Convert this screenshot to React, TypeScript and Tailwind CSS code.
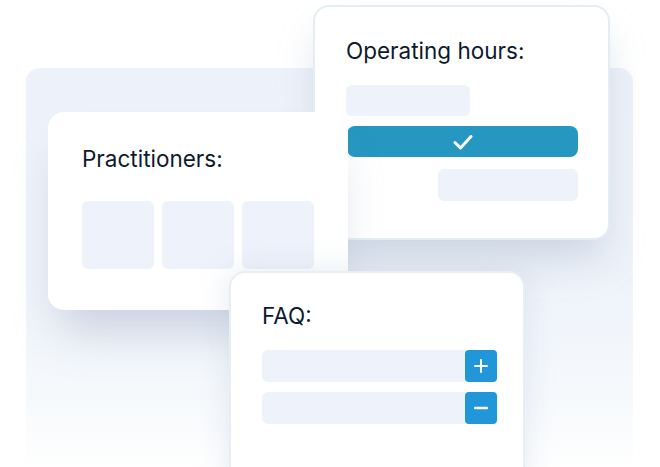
import React from "react";

export default function App() {
  return (
    <div
      className="relative w-[660px] h-[467px] overflow-hidden bg-white"
      style={{ fontFamily: "Inter, 'Noto Sans', sans-serif" }}
    >
      {/* background panel */}
      <div className="absolute left-[26px] top-[68px] w-[607px] h-[420px] rounded-[14px] bg-[linear-gradient(to_bottom,#edf2fa_0%,#eef3fa_50%,#f6f9fc_78%,#ffffff_96%)]" />

      {/* Operating hours card */}
      <div className="absolute left-[313px] top-[5px] w-[297px] h-[235px] rounded-[16px] border-2 border-[#e4eef2] bg-white shadow-[0_24px_40px_-8px_rgba(150,165,190,0.4)] pl-[31px] pt-[30px] pr-[30px]">
        <div className="text-[22.5px] leading-[28px] text-[#0d1a2c]">Operating hours:</div>
        <div className="mt-[20px] flex flex-col w-[232px]">
          <div className="h-[31px] w-[124px] rounded-[6px] bg-[#edf2fb]" />
          <div className="mt-[10px] h-[31px] w-[231px] ml-[1px] rounded-[8px] bg-[#2597c1] flex items-center justify-center">
            <svg width="20" height="16" viewBox="0 0 20 16" fill="none">
              <path d="M2 8.5 L7.5 14 L18 2.5" stroke="white" strokeWidth="3" strokeLinecap="round" strokeLinejoin="round" />
            </svg>
          </div>
          <div className="mt-[12px] h-[32px] w-[140px] self-end rounded-[6px] bg-[#edf2fb]" />
        </div>
      </div>

      {/* Practitioners card */}
      <div className="absolute left-[48px] top-[112px] w-[300px] h-[198px] rounded-[16px] bg-white shadow-[0_34px_44px_-12px_rgba(150,165,190,0.42)] pl-[34px] pt-[33px]">
        <div className="text-[22.5px] leading-[28px] text-[#0d1a2c]">Practitioners:</div>
        <div className="mt-[28px] flex gap-[8px]">
          <div className="w-[72px] h-[68px] rounded-[6px] bg-[#edf2fb]" />
          <div className="w-[72px] h-[68px] rounded-[6px] bg-[#edf2fb]" />
          <div className="w-[72px] h-[68px] rounded-[6px] bg-[#edf2fb]" />
        </div>
      </div>

      {/* FAQ card */}
      <div className="absolute left-[229px] top-[271px] w-[296px] h-[230px] rounded-[16px] border-2 border-[#e6eff3] bg-white shadow-[0_0_30px_rgba(170,185,205,0.3)] pl-[31px] pt-[29px]">
        <div className="text-[22.5px] leading-[28px] text-[#0d1a2c]">FAQ:</div>
        <div className="mt-[20px] flex flex-col gap-[10px] w-[235px]">
          <div className="h-[32px] flex rounded-[6px] bg-[#edf2fb]">
            <div className="flex-1" />
            <div className="w-[32px] h-[32px] rounded-[4px] bg-[#2196d8] flex items-center justify-center">
              <svg width="14" height="14" viewBox="0 0 14 14" fill="none">
                <path d="M7 1 V13 M1 7 H13" stroke="white" strokeWidth="2" strokeLinecap="round" />
              </svg>
            </div>
          </div>
          <div className="h-[32px] flex rounded-[6px] bg-[#edf2fb]">
            <div className="flex-1" />
            <div className="w-[32px] h-[32px] rounded-[4px] bg-[#2196d8] flex items-center justify-center">
              <svg width="14" height="14" viewBox="0 0 14 14" fill="none">
                <path d="M1 7 H13" stroke="white" strokeWidth="2.5" strokeLinecap="round" />
              </svg>
            </div>
          </div>
        </div>
      </div>
    </div>
  );
}
